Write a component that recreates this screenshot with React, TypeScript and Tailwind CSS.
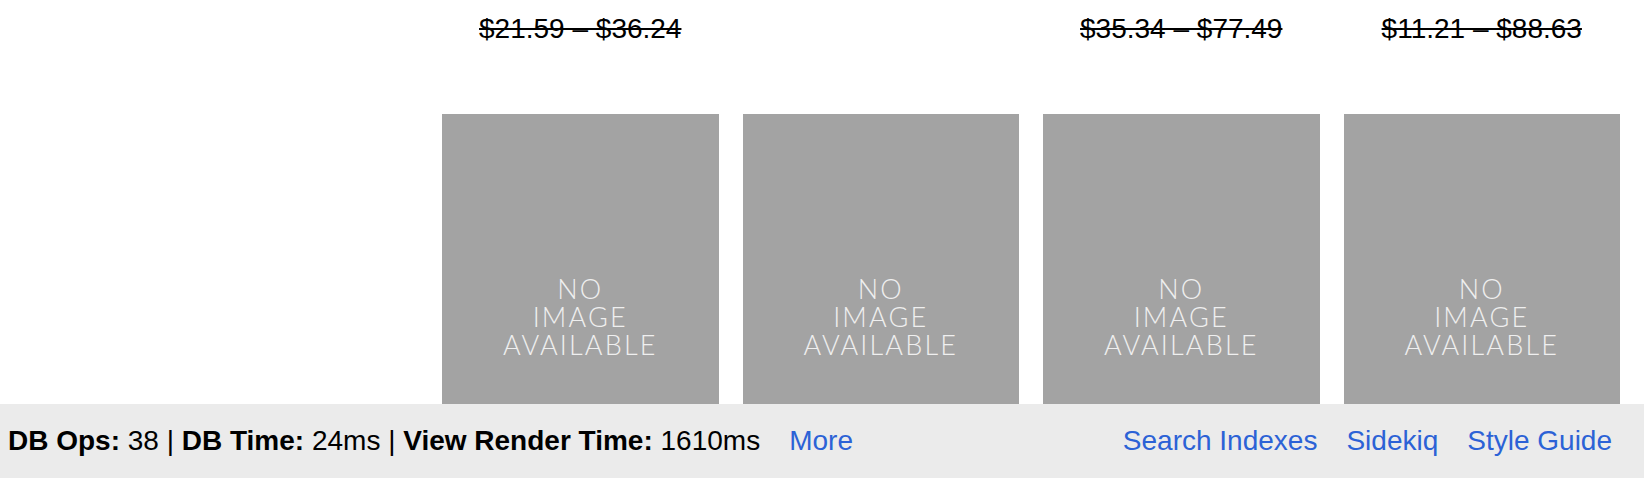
import React from 'react';

const products = [
    { id: 1, price: '$21.59 – $36.24' },
    { id: 2, price: null },
    { id: 3, price: '$35.34 – $77.49' },
    { id: 4, price: '$11.21 – $88.63' },
];

const NoImage = () => (
    <div className="h-[320px] w-full bg-[#a3a3a3] pt-[161px] text-center">
        <p
            className="text-[27px] leading-[28px] font-light tracking-[0.08em] text-[#efefef]"
            style={{ fontFamily: 'Lato, "Open Sans", sans-serif' }}
        >
            NO<br />IMAGE<br />AVAILABLE
        </p>
    </div>
);

const Footer = () => (
    <div className="fixed bottom-0 left-0 right-0 h-[74px] bg-[#ebebeb] flex items-center justify-between pl-2 pr-8 text-[28px] text-black">
        <div className="flex items-center whitespace-pre">
            <span>
                <b>DB Ops:</b> 38 | <b>DB Time:</b> 24ms | <b>View Render Time:</b> 1610ms
            </span>
            <a href="#" className="ml-[29px] text-[#2c62d6]">More</a>
        </div>
        <div className="flex items-center gap-[29px] text-[#2c62d6]">
            <a href="#">Search Indexes</a>
            <a href="#">Sidekiq</a>
            <a href="#">Style Guide</a>
        </div>
    </div>
);

export default function App() {
    return (
        <div
            className="min-h-[478px] bg-white overflow-hidden"
            style={{ fontFamily: '"Liberation Sans", Arial, sans-serif' }}
        >
            <div className="flex">
                <aside className="w-[442px] shrink-0" />
                <div className="flex-1 pr-6 grid grid-cols-4 gap-6">
                    {products.map((product) => (
                        <div key={product.id} className="flex flex-col">
                            <div className="h-[114px] pt-2 text-center text-[28px] text-black">
                                {product.price && <span className="line-through">{product.price}</span>}
                            </div>
                            <NoImage />
                        </div>
                    ))}
                </div>
            </div>
            <Footer />
        </div>
    );
}
